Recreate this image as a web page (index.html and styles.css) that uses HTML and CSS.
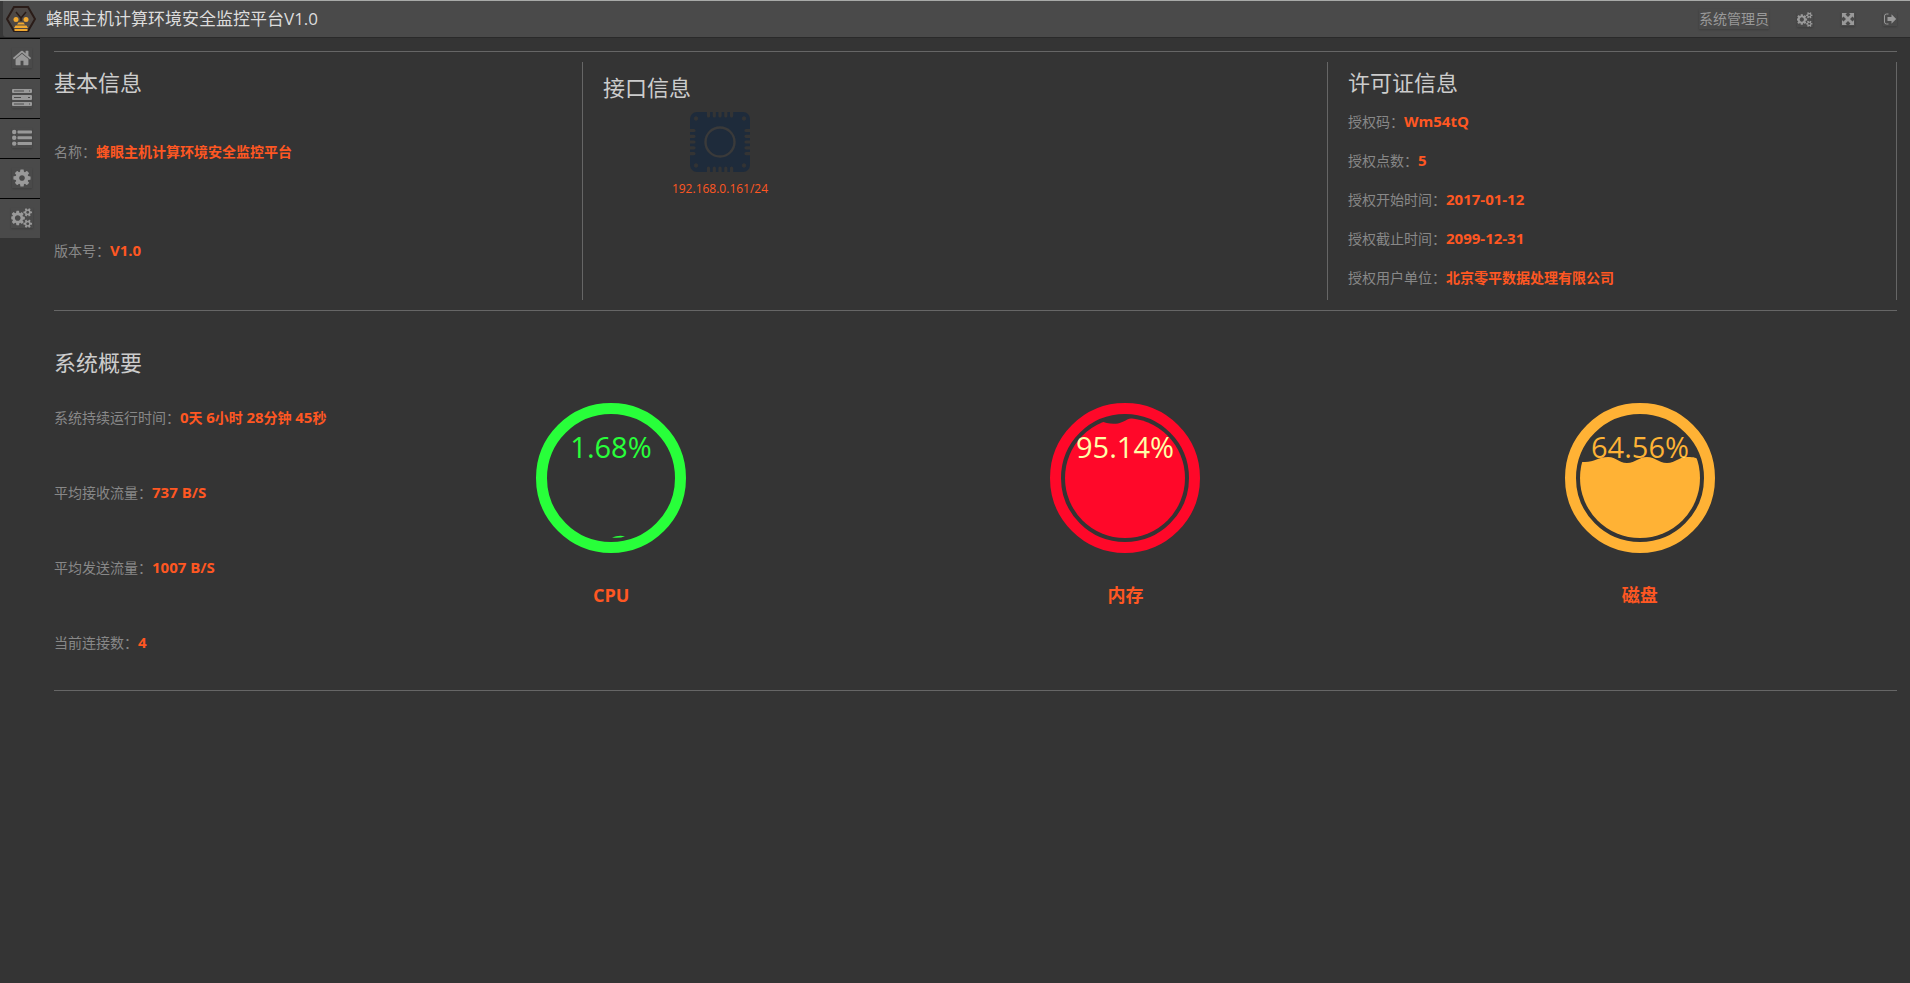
FILE: index.html
```html
<!DOCTYPE html>
<html lang="zh-CN">
<head>
<meta charset="utf-8">
<meta name="viewport" content="width=device-width, initial-scale=1">
<title>蜂眼主机计算环境安全监控平台V1.0</title>
<link rel="stylesheet" href="styles.css">
</head>
<body>
<svg class="defs" aria-hidden="true">
  <symbol id="i-cogs" viewBox="0 0 1920 1792"><path d="M832 896q0-106-75-181t-181-75-181 75-75 181 75 181 181 75 181-75 75-181zm768 512q0-52-38-90t-90-38-90 38-38 90q0 53 37.5 90.5t90.5 37.5 90.5-37.5 37.5-90.5zm0-1024q0-52-38-90t-90-38-90 38-38 90q0 53 37.5 90.5t90.5 37.5 90.5-37.5 37.5-90.5zm-384 421v185q0 10-7 19.5t-16 10.5l-155 24q-11 35-32 76 34 48 90 115 7 11 7 20 0 12-7 19-23 30-82.5 89.5t-78.5 59.5q-11 0-21-7l-115-90q-37 19-77 31-11 108-23 155-7 24-30 24h-186q-11 0-20-7.5t-10-17.5l-23-153q-34-10-75-31l-118 89q-7 7-20 7-11 0-21-8-144-133-144-160 0-9 7-19 10-14 41-53t47-61q-23-44-35-82l-152-24q-10-1-17-9.5t-7-19.5v-185q0-10 7-19.5t16-10.5l155-24q11-35 32-76-34-48-90-115-7-11-7-20 0-12 7-20 22-30 82-89t79-59q11 0 21 7l115 90q34-18 77-32 11-108 23-154 7-24 30-24h186q11 0 20 7.5t10 17.5l23 153q34 10 75 31l118-89q8-7 20-7 11 0 21 8 144 133 144 160 0 8-7 19-12 16-42 54t-45 60q23 48 34 82l152 23q10 2 17 10.5t7 19.5zm640 533v140q0 16-149 31-12 27-30 52 51 113 51 138 0 4-4 7-122 71-124 71-8 0-46-47t-52-68q-20 2-30 2t-30-2q-14 21-52 68t-46 47q-2 0-124-71-4-3-4-7 0-25 51-138-18-25-30-52-149-15-149-31v-140q0-16 149-31 13-29 30-52-51-113-51-138 0-4 4-7 4-2 35-20t59-34 30-16q8 0 46 46.5t52 67.5q20-2 30-2t30 2q51-71 92-112l6-2q4 0 124 70 4 3 4 7 0 25-51 138 17 23 30 52 149 15 149 31zm0-1024v140q0 16-149 31-12 27-30 52 51 113 51 138 0 4-4 7-122 71-124 71-8 0-46-47t-52-68q-20 2-30 2t-30-2q-14 21-52 68t-46 47q-2 0-124-71-4-3-4-7 0-25 51-138-18-25-30-52-149-15-149-31v-140q0-16 149-31 13-29 30-52-51-113-51-138 0-4 4-7 4-2 35-20t59-34 30-16q8 0 46 46.5t52 67.5q20-2 30-2t30 2q51-71 92-112l6-2q4 0 124 70 4 3 4 7 0 25-51 138 17 23 30 52 149 15 149 31z"/></symbol>
</svg>

<header class="topbar">
  <div class="brandbar">
    <svg class="logo" viewBox="0 0 30 26" aria-hidden="true">
      <path d="M8 1h14l7 12-7 12H8L1 13z" fill="#4e4845" stroke="#2a1c18" stroke-width="2"/>
      <path d="M10 6l5 6 5-6M15 11v4" fill="none" stroke="#2a1c18" stroke-width="1.5"/>
      <circle cx="10" cy="13.500" r="2.500" fill="#f0a830"/><circle cx="20" cy="13.500" r="2.500" fill="#f0a830"/>
      <path d="M12.500 16.500h5l1.500 2h-8zM9.500 19.500h11l1.500 2.500H8zM8.500 23h13v2h-13z" fill="#f0a830"/>
    </svg>
    <h1 class="brand">蜂眼主机计算环境安全监控平台V1.0</h1>
    <div class="tools">
      <a class="user" href="#user">系统管理员</a>
      <button class="tool" type="button" aria-label="设置"><svg class="icon-sm icon-sm-wide" viewBox="0 0 1920 1792"><use href="#i-cogs"/></svg></button>
      <button class="tool" type="button" aria-label="全屏"><svg class="icon-sm" viewBox="0 0 14 14"><path d="M1 1h5L4.500 2.500 7 5l2.500-2.500L8 1h5v5l-1.500-1.500L9 7l2.500 2.500L13 8v5H8l1.500-1.500L7 9l-2.500 2.500L6 13H1V8l1.500 1.500L5 7 2.500 4.500 1 6z"/></svg></button>
      <button class="tool" type="button" aria-label="退出"><svg class="icon-sm" viewBox="0 0 14 14"><path d="M5.500 2H3.500Q1.500 2 1.500 4v6q0 2 2 2h2" fill="none" stroke="currentColor"/><path d="M4.500 5h4V2.200L13.200 7 8.500 11.800V9h-4z"/></svg></button>
    </div>
  </div>
</header>

<div class="shell">
  <nav class="side" aria-label="主导航">
    <a class="side-link" href="#home" aria-label="首页"><svg class="icon" viewBox="0 0 1792 1792"><path d="M1472 992v480q0 26-19 45t-45 19h-384v-384h-256v384h-384q-26 0-45-19t-19-45v-480q0-1 .5-3t.5-3l575-474 575 474q1 2 1 6zm223-69l-62 74q-8 9-21 11h-3q-13 0-21-7l-692-577-692 577q-12 8-24 7-13-2-21-11l-62-74q-8-10-7-23.500t11-21.500l719-599q32-26 76-26t76 26l244 204v-195q0-14 9-23t23-9h192q14 0 23 9t9 23v408l219 182q10 8 11 21.500t-7 23.500z"/></svg></a>
    <a class="side-link" href="#hosts" aria-label="主机"><svg class="icon" viewBox="0 0 20 20"><path fill-rule="evenodd" d="M1 1h18q1 0 1 1v2q0 1-1 1H1Q0 5 0 4V2q0-1 1-1zm1 1.500v1h10v-1zm15 0v1h1v-1zM1 7h18q1 0 1 1v3q0 1-1 1H1q-1 0-1-1V8q0-1 1-1zm1 2v1h7V9zm14 0v1h2V9zM1 14h18q1 0 1 1v2q0 1-1 1H1q-1 0-1-1v-2q0-1 1-1zm1 1.500v1h10v-1zm15 0v1h1v-1z"/></svg></a>
    <a class="side-link" href="#list" aria-label="列表"><svg class="icon" viewBox="0 0 20 20"><circle cx="2.200" cy="4" r="2.200"/><circle cx="2.200" cy="9.800" r="2.200"/><circle cx="2.200" cy="15.600" r="2.200"/><path d="M6 2.500h13.500l.5.500v2l-.5.500H6L5.500 5V3zM6 8.300h13.500l.5.500v2l-.5.500H6l-.5-.5v-2zM6 14.100h13.500l.5.500v2l-.5.500H6l-.5-.5v-2z"/></svg></a>
    <a class="side-link" href="#config" aria-label="配置"><svg class="icon" viewBox="0 0 1792 1792"><path d="M1152 896q0-106-75-181t-181-75-181 75-75 181 75 181 181 75 181-75 75-181zm512-109v222q0 12-8 23t-20 13l-185 28q-19 54-39 91 35 50 107 138 10 12 10 25t-9 23q-27 37-99 108t-94 71q-12 0-26-9l-138-108q-44 23-91 38-16 136-29 186-7 28-36 28h-222q-14 0-24.500-8.500t-11.500-21.500l-28-184q-49-16-90-37l-141 107q-10 9-25 9-14 0-25-11-126-114-165-168-7-10-7-23 0-12 8-23 15-21 51-66.500t54-70.500q-27-50-41-99l-183-27q-13-2-21-12.500t-8-23.500v-222q0-12 8-23t19-13l186-28q14-46 39-92-40-57-107-138-10-12-10-24 0-10 9-23 26-36 98.500-107.500t94.500-71.500q13 0 26 10l138 107q44-23 91-38 16-136 29-186 7-28 36-28h222q14 0 24.500 8.500t11.500 21.500l28 184q49 16 90 37l142-107q9-9 24-9 13 0 25 10 129 119 165 170 7 8 7 22 0 12-8 23-15 21-51 66.500t-54 70.500q26 50 41 98l183 28q13 2 21 12.500t8 23.500z"/></svg></a>
    <a class="side-link" href="#system" aria-label="系统"><svg class="icon icon-wide" viewBox="0 0 1920 1792"><use href="#i-cogs"/></svg></a>
  </nav>

  <main class="main">
    <section class="info">
      <article class="panel">
        <h2 class="title">基本信息</h2>
        <div class="rows rows-basic">
          <p class="row">名称：<b class="value">蜂眼主机计算环境安全监控平台</b></p>
          <p class="row">版本号：<b class="value num">V1.0</b></p>
        </div>
      </article>
      <article class="panel panel-ports">
        <h2 class="title">接口信息</h2>
        <figure class="port">
          <svg class="chip" viewBox="0 0 60 60" aria-hidden="true">
            <rect width="60" height="60" rx="7" fill="#1e2b3b"/>
            <g fill="#343434" stroke="#343434">
              <circle cx="6" cy="6.500" r="1.700"/><circle cx="54" cy="6.500" r="1.700"/><circle cx="6" cy="53.500" r="1.700"/><circle cx="54" cy="53.500" r="1.700"/>
            </g>
            <g stroke="#343434" stroke-width="3.200" stroke-linecap="round" fill="none">
              <path d="M18.500-1v5M24.300-1v5M30-1v5M35.800-1v5M41.600-1v5M18.500 61v-5M24.300 61v-5M30 61v-5M35.800 61v-5M41.600 61v-5M-1 18.500h5M-1 24.300h5M-1 30h5M-1 35.800h5M-1 41.600h5M61 18.500h-5M61 24.300h-5M61 30h-5M61 35.800h-5M61 41.600h-5"/>
              <circle cx="30" cy="30" r="14.500" stroke="#3a3a3a" stroke-width="2.400"/>
            </g>
          </svg>
          <figcaption class="ip">192.168.0.161/24</figcaption>
        </figure>
      </article>
      <article class="panel">
        <h2 class="title">许可证信息</h2>
        <div class="rows rows-license">
          <p class="row">授权码：<b class="value num">Wm54tQ</b></p>
          <p class="row">授权点数：<b class="value num">5</b></p>
          <p class="row">授权开始时间：<b class="value num">2017-01-12</b></p>
          <p class="row">授权截止时间：<b class="value num">2099-12-31</b></p>
          <p class="row">授权用户单位：<b class="value">北京零平数据处理有限公司</b></p>
        </div>
      </article>
    </section>

    <section class="overview">
      <h2 class="title">系统概要</h2>
      <div class="overview-body">
        <div class="rows rows-stats">
          <p class="row">系统持续运行时间：<b class="value"><span class="num">0</span>天 <span class="num">6</span>小时 <span class="num">28</span>分钟 <span class="num">45</span>秒</b></p>
          <p class="row">平均接收流量：<b class="value num">737 B/S</b></p>
          <p class="row">平均发送流量：<b class="value num">1007 B/S</b></p>
          <p class="row">当前连接数：<b class="value num">4</b></p>
        </div>
        <figure class="gauge">
          <svg class="dial" viewBox="0 0 150 150">
            <circle cx="75" cy="75" r="69.500" fill="none" stroke="#28ff3a" stroke-width="11"/>
            <path d="M76 134.500q6-2.500 13-1.300-5 2.300-13 1.300z" fill="#28ff3a"/>
            <text class="percent" x="75" y="55" fill="#28ff3a">1.68%</text>
          </svg>
          <figcaption class="gauge-name">CPU</figcaption>
        </figure>
        <figure class="gauge">
          <svg class="dial" viewBox="0 0 150 150">
            <clipPath id="tank"><circle cx="75" cy="75" r="60"/></clipPath>
            <circle cx="75" cy="75" r="69.500" fill="none" stroke="#ff0829" stroke-width="11"/>
            <path clip-path="url(#tank)" d="M10 15Q34 15 50 18C56 20 61 21.500 68 20.500C75 19 76 15.500 84 15Q92 15 96 18L140 15V140H10z" fill="#ff0829"/>
            <text class="percent" x="75" y="55" fill="#ffffa8">95.14%</text>
          </svg>
          <figcaption class="gauge-name">内存</figcaption>
        </figure>
        <figure class="gauge">
          <svg class="dial" viewBox="0 0 150 150">
            <defs>
              <path id="wave" d="M10 59H20C29 59 34 54 43 54S53 60 62 60 73 54 82 54 93 60 102 60 113 54 122 54 130 55 136 57V140H10z"/>
              <pattern id="disk-text" width="150" height="150" patternUnits="userSpaceOnUse"><rect width="150" height="150" fill="#ffb235"/><use href="#wave" fill="#ffff9c"/></pattern>
            </defs>
            <circle cx="75" cy="75" r="69.500" fill="none" stroke="#ffb235" stroke-width="11"/>
            <use href="#wave" clip-path="url(#tank)" fill="#ffb235"/>
            <text class="percent" x="75" y="55" fill="url(#disk-text)">64.56%</text>
          </svg>
          <figcaption class="gauge-name">磁盘</figcaption>
        </figure>
      </div>
    </section>
  </main>
</div>
</body>
</html>
```
FILE: styles.css
```css
* { box-sizing: border-box; }

body {
  margin: 0;
  min-height: 100vh;
  background: #343434;
  color: #888;
  font: 14px/20px "Open Sans", "Noto Sans CJK SC", sans-serif;
}

h1, h2, p, figure { margin: 0; font-weight: 400; }
a { color: inherit; text-decoration: none; }
.defs { display: none; }

.topbar {
  height: 38px;
  padding-left: 3px;
  border-top: 1px solid #a8aaa8;
  border-bottom: 1px solid #2a2a2a;
  background: #383838;
}
.brandbar {
  display: flex;
  align-items: center;
  height: 36px;
  padding: 0 13px 0 3px;
  border-bottom-left-radius: 3px;
  background: #4a4a4a;
}
.logo { width: 30px; height: 26px; }
.brand {
  margin-left: 10px;
  color: #ddd;
  font-size: 17px;
  line-height: 24px;
}
.tools {
  display: flex;
  align-items: center;
  gap: 28px;
  margin-left: auto;
  color: #999;
}
.user, .icon, .icon-sm { box-shadow: 0 1px 2px rgba(0, 0, 0, .18); }
.tool {
  display: flex;
  padding: 0;
  border: 0;
  background: none;
  color: inherit;
}
.icon-sm { width: 14px; height: 14px; fill: currentColor; }
.icon-sm-wide { width: 16px; height: 15px; }

.shell { display: flex; align-items: flex-start; }
.side { flex: none; width: 40px; }
.side-link {
  display: flex;
  align-items: center;
  justify-content: center;
  height: 40px;
  padding: 0 0 2px 4px;
  border-top: 1px solid #000;
  background: #4a4a4a;
  color: #999;
}
.icon { flex: none; width: 20px; height: 20px; fill: currentColor; }
.icon-wide { width: 22px; }

.main {
  flex: 1;
  min-width: 0;
  padding: 13px 13px 0 14px;
}

.info {
  display: grid;
  grid-template-columns: 529fr 745fr 569fr;
  padding: 10px 0;
  border-top: 1px solid #666;
  border-bottom: 1px solid #666;
}
.panel {
  min-height: 238px;
  padding: 5px 0 0 20px;
  border-right: 1px solid #666;
}
.panel:first-child { padding-left: 0; }
.panel-ports { padding-top: 10px; }
.title {
  color: #ccc;
  font-size: 22px;
  line-height: 30px;
}
.value { color: #ff5722; font-weight: 700; line-height: 1; }
.num { font-size: 15px; line-height: 1; }
.rows { display: grid; }
.rows-basic { gap: 79px; padding-top: 45px; }
.rows-license { gap: 19px; padding-top: 15px; }
.rows-stats { gap: 55px; align-content: start; padding-top: 5px; }

.port {
  display: grid;
  justify-items: center;
  gap: 7px;
  width: 136px;
  margin: 10px 0 0 49px;
}
.chip { width: 60px; height: 60px; }
.ip { color: #ff5722; font-size: 12px; line-height: 20px; }

.overview {
  padding: 36px 0 37px;
  border-bottom: 1px solid #666;
}
.overview-body {
  display: grid;
  grid-template-columns: 300px repeat(3, 1fr);
  padding-top: 26px;
}
.gauge {
  display: grid;
  justify-items: center;
  align-content: start;
  gap: 27px;
}
.dial { width: 150px; height: 150px; }
.percent { font-size: 29px; text-anchor: middle; }
.gauge-name {
  color: #ff5722;
  font-size: 18px;
  font-weight: 700;
  line-height: 30px;
}
```
